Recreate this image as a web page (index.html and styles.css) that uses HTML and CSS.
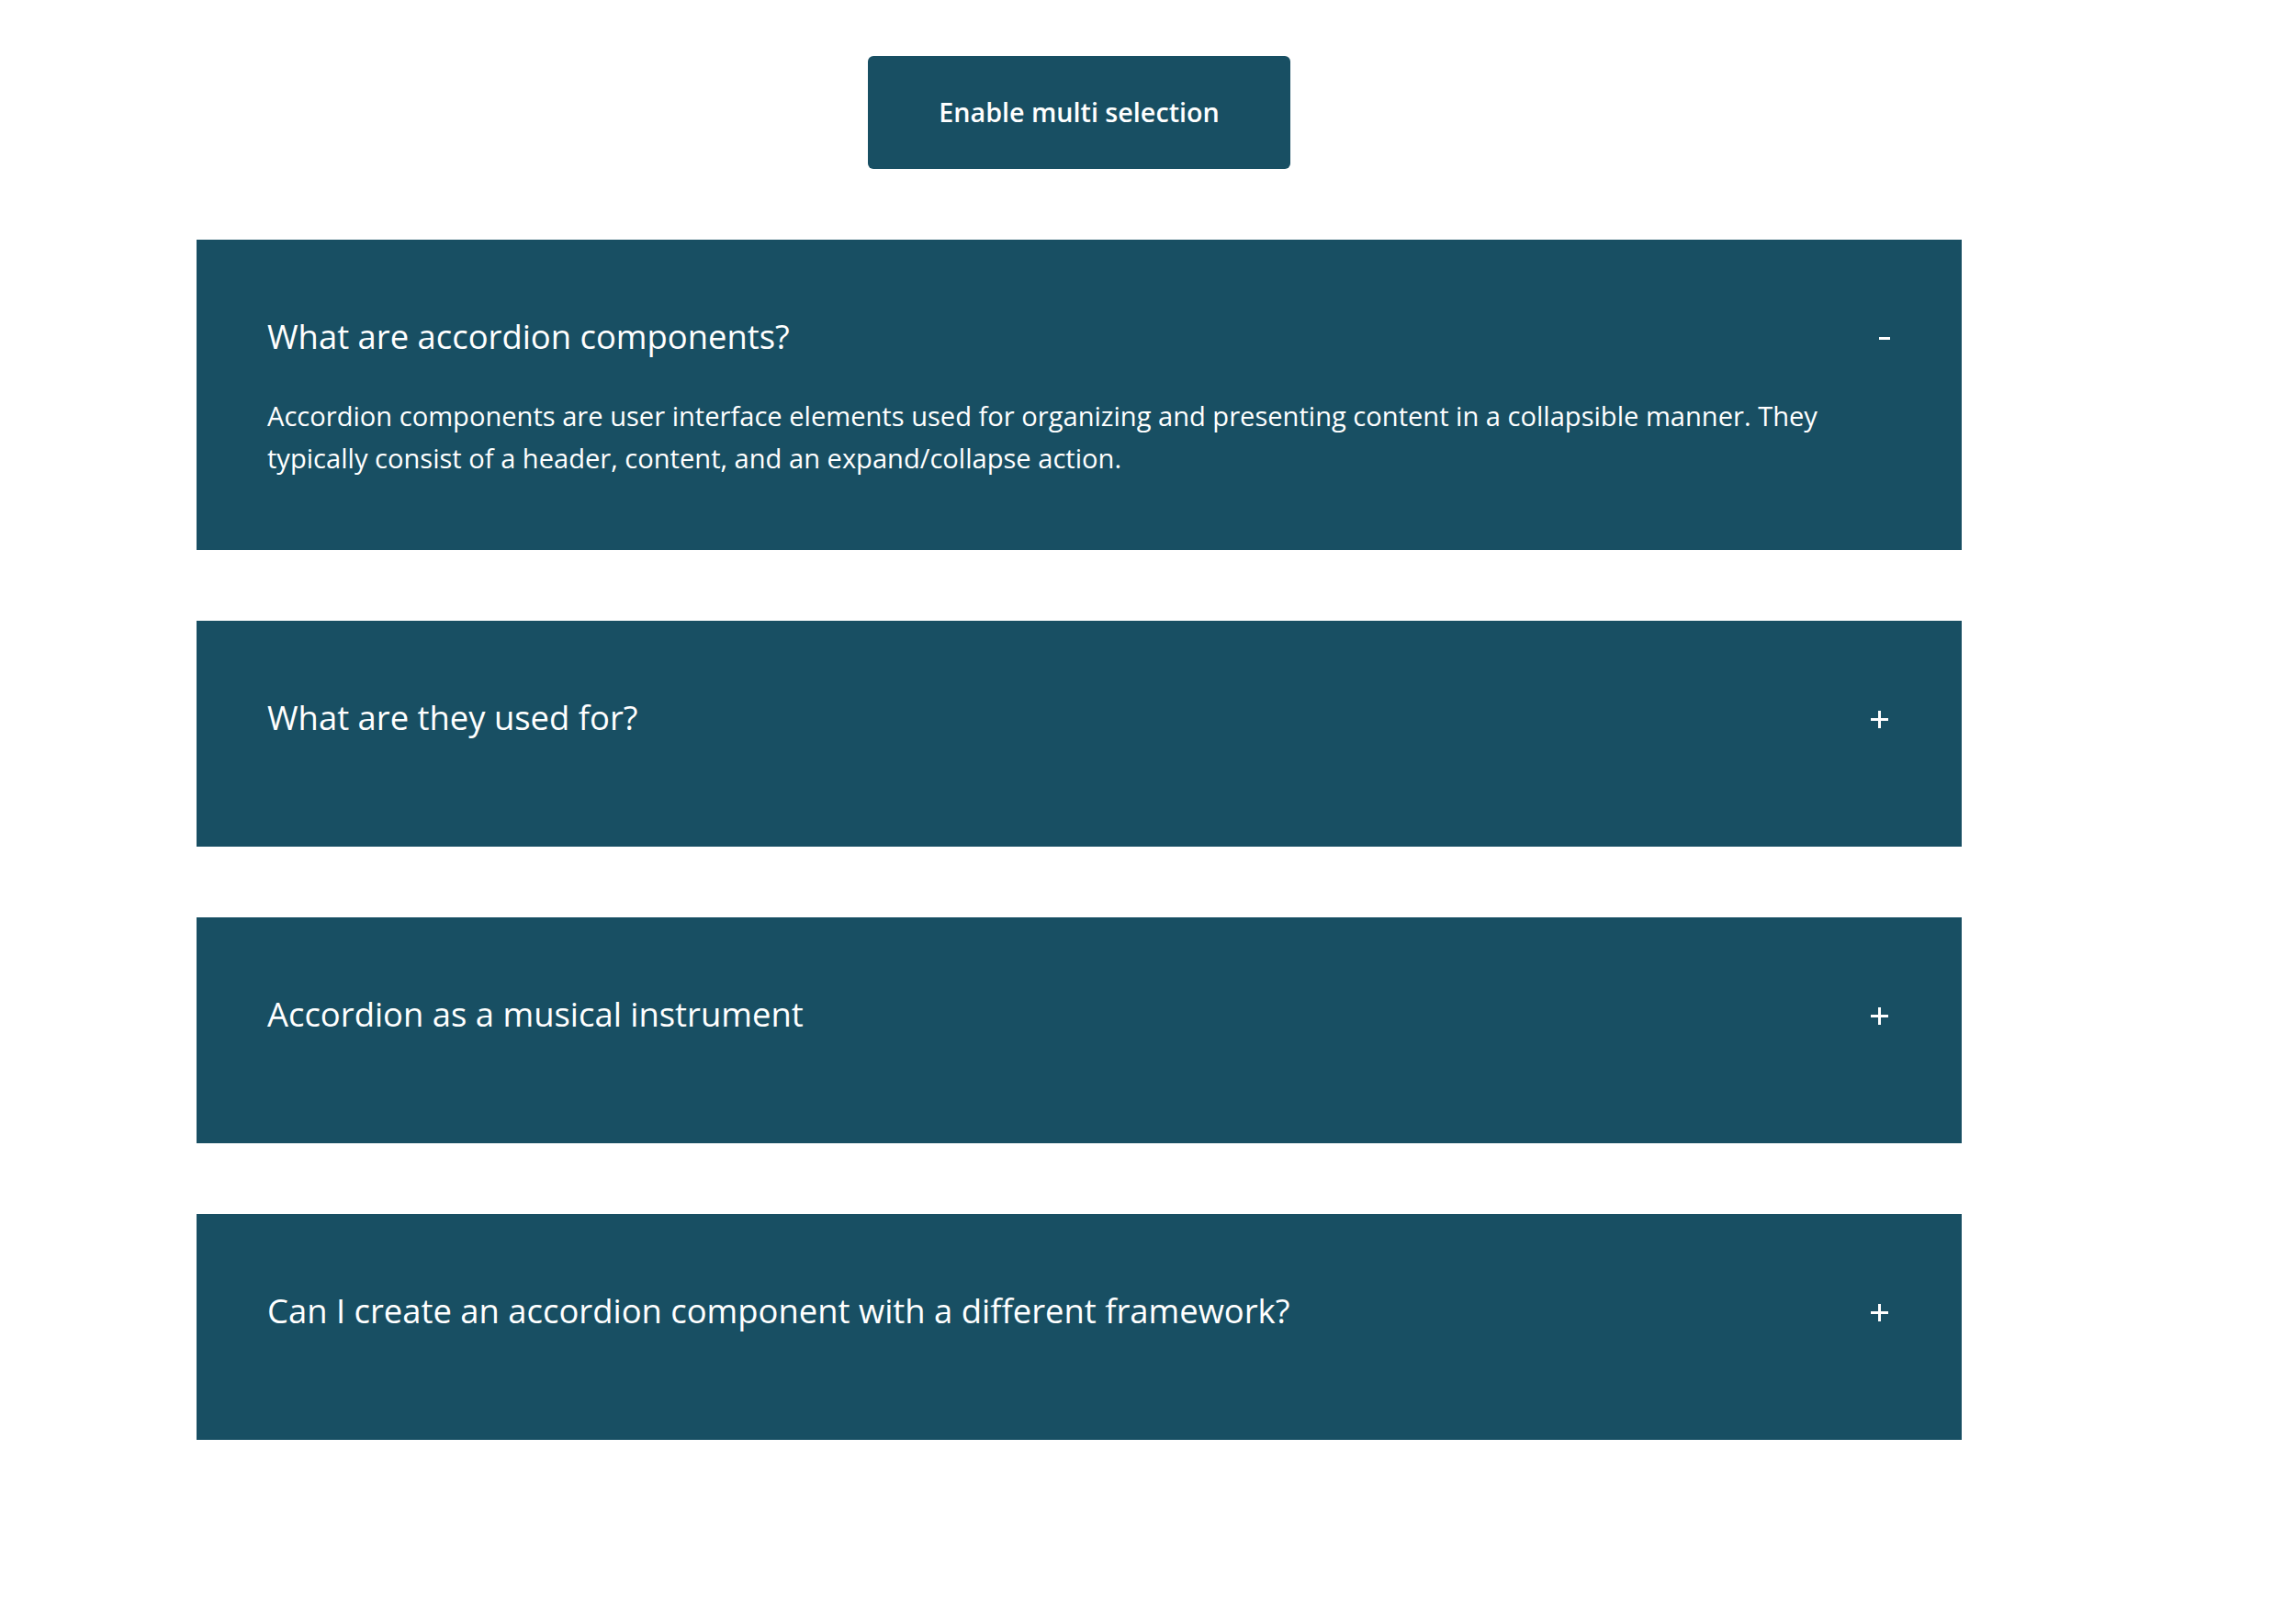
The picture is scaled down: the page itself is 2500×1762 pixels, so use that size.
FILE: index.html
```html
<!DOCTYPE html>
<html lang="en">
<head>
<meta charset="utf-8">
<title>Accordion</title>
<link rel="stylesheet" href="styles.css">
</head>
<body>
<div class="page">
  <div class="wrap">
    <button class="toggle" type="button">Enable multi selection</button>
    <div class="accordion">
      <div class="item">
        <div class="head">
          <h3 class="title">What are accordion components?</h3>
          <svg class="icon" width="24" height="24" viewBox="0 0 24 24"><rect x="10" y="10" width="12" height="3" fill="#fff"/></svg>
        </div>
        <p class="content">Accordion components are user interface elements used for organizing and presenting content in a collapsible manner. They typically consist of a header, content, and an expand/collapse action.</p>
      </div>
      <div class="item">
        <div class="head">
          <h3 class="title">What are they used for?</h3>
          <svg class="icon" width="24" height="24" viewBox="0 0 24 24"><rect x="1" y="10" width="19" height="3" fill="#fff"/><rect x="9" y="2" width="3" height="19" fill="#fff"/></svg>
        </div>
      </div>
      <div class="item">
        <div class="head">
          <h3 class="title">Accordion as a musical instrument</h3>
          <svg class="icon" width="24" height="24" viewBox="0 0 24 24"><rect x="1" y="10" width="19" height="3" fill="#fff"/><rect x="9" y="2" width="3" height="19" fill="#fff"/></svg>
        </div>
      </div>
      <div class="item">
        <div class="head">
          <h3 class="title">Can I create an accordion component with a different framework?</h3>
          <svg class="icon" width="24" height="24" viewBox="0 0 24 24"><rect x="1" y="10" width="19" height="3" fill="#fff"/><rect x="9" y="2" width="3" height="19" fill="#fff"/></svg>
        </div>
      </div>
    </div>
  </div>
</div>
</body>
</html>
```
FILE: styles.css
```css
html, body {
  margin: 0;
  padding: 0;
  background: #ffffff;
}

body {
  font-family: "Open Sans", "Noto Sans", sans-serif;
  color: #ffffff;
}

.page {
  padding: 61px 0 0 214px;
}

.wrap {
  width: 1922px;
  display: flex;
  flex-direction: column;
}

.toggle {
  align-self: center;
  width: 460px;
  height: 123px;
  margin: 0 0 77px 0;
  padding: 0 0 2px 0;
  border: none;
  border-radius: 6px;
  background: #184f63;
  color: #ffffff;
  font-family: "Open Sans", "Noto Sans", sans-serif;
  font-size: 28.7px;
  font-weight: 600;
  cursor: pointer;
}

.accordion {
  display: flex;
  flex-direction: column;
  gap: 77px;
}

.item {
  background: #184f63;
  padding: 77px;
}

.head {
  display: flex;
  align-items: flex-start;
  margin-bottom: 41px;
}

.title {
  flex: 1;
  margin: 0;
  font-size: 36.4px;
  font-weight: 400;
  line-height: 51px;
  padding-top: 3px;
  margin-bottom: -3px;
}

.icon {
  flex: none;
  margin-top: 19px;
  margin-right: -1px;
}

.content {
  margin: 0;
  font-size: 29.1px;
  line-height: 46px;
}
```
